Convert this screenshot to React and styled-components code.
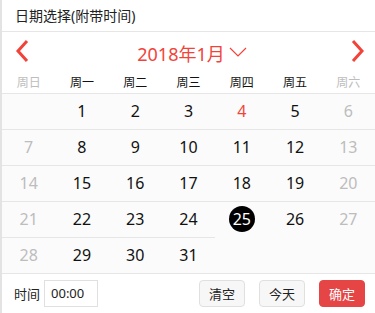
import React from "react";
import styled, { createGlobalStyle } from "styled-components";

const GlobalStyle = createGlobalStyle`
  body {
    margin: 0;
    background: #fff;
    font-family: "Noto Sans", "Noto Sans CJK SC", sans-serif;
  }
`;

const weekNames = ["周日", "周一", "周二", "周三", "周四", "周五", "周六"];

const buildDays = () => {
  const days = [null];
  for (let d = 1; d <= 31; d++) days.push(d);
  return days;
};

const Picker = () => {
  const days = buildDays();
  return (
    <Wrapper>
      <GlobalStyle />
      <Title>日期选择(附带时间)</Title>
      <MonthBar>
        <ArrowButton>
          <svg width="14" height="24" viewBox="0 0 14 24">
            <path d="M12 2 L3 12 L12 22" fill="none" stroke="#f2433a" strokeWidth="3" />
          </svg>
        </ArrowButton>
        <MonthLabel>
          2018年1月
          <svg width="18" height="10" viewBox="0 0 18 10">
            <path d="M1 1 L9 9 L17 1" fill="none" stroke="#f2433a" strokeWidth="1.2" />
          </svg>
        </MonthLabel>
        <ArrowButton>
          <svg width="14" height="24" viewBox="0 0 14 24">
            <path d="M2 2 L11 12 L2 22" fill="none" stroke="#f2433a" strokeWidth="3" />
          </svg>
        </ArrowButton>
      </MonthBar>
      <WeekRow>
        {weekNames.map((w, i) => (
          <WeekName key={w} $weekend={i === 0 || i === 6}>
            {w}
          </WeekName>
        ))}
      </WeekRow>
      <DayGrid>
        {days.map((d, i) => {
          const col = i % 7;
          return (
            <DayCell key={i}>
              {d === 25 ? (
                <Selected>{d}</Selected>
              ) : (
                <DayNum $weekend={col === 0 || col === 6} $red={d === 4}>
                  {d}
                </DayNum>
              )}
            </DayCell>
          );
        })}
      </DayGrid>
      <Footer>
        <TimeLabel>时间</TimeLabel>
        <TimeInput>00:00</TimeInput>
        <Spacer />
        <Button>清空</Button>
        <Button>今天</Button>
        <Button $primary>确定</Button>
      </Footer>
    </Wrapper>
  );
};

const Wrapper = styled.div`
  width: 373px;
  height: 313px;
  border-left: 2px solid #e3e3e3;
  display: flex;
  flex-direction: column;
  background: #fff;
`;

const Title = styled.div`
  height: 31px;
  line-height: 31px;
  padding-left: 13px;
  font-size: 14px;
  color: #222;
  border-bottom: 1px solid #e6e6e6;
`;

const MonthBar = styled.div`
  height: 38px;
  display: flex;
  align-items: center;
  justify-content: space-between;
  padding: 0 9px 0 12px;
`;

const ArrowButton = styled.div`
  width: 16px;
  height: 24px;
  display: flex;
  align-items: center;
  justify-content: center;
`;

const MonthLabel = styled.div`
  display: flex;
  align-items: center;
  gap: 4px;
  font-size: 18px;
  color: #f2433a;
  padding-top: 3px;
  margin-left: 4px;

  svg {
    margin-top: -2px;
  }
`;

const WeekRow = styled.div`
  display: grid;
  grid-template-columns: repeat(7, 1fr);
  height: 22px;
  align-items: center;
  padding-top: 1px;
`;

const WeekName = styled.div`
  text-align: center;
  font-size: 12px;
  color: ${(p) => (p.$weekend ? "#bdbdbd" : "#111")};
`;

const DayGrid = styled.div`
  display: grid;
  grid-template-columns: repeat(7, 1fr);
  grid-auto-rows: 36px;
  background: #fbfbfb;
  height: 180px;
`;

const DayCell = styled.div`
  border-top: 1px solid #e6e6e6;
  display: flex;
  align-items: center;
  justify-content: center;
  padding-bottom: 1px;
`;

const DayNum = styled.span`
  font-size: 16px;
  color: ${(p) => (p.$red ? "#f2433a" : p.$weekend ? "#bdbdbd" : "#111")};
`;

const Selected = styled.span`
  width: 26px;
  height: 26px;
  border-radius: 50%;
  background: #000;
  color: #fff;
  font-size: 16px;
  display: flex;
  align-items: center;
  justify-content: center;
`;

const Footer = styled.div`
  flex: 1;
  border-top: 1px solid #e6e6e6;
  display: flex;
  align-items: center;
  padding: 0 10px 0 12px;
  gap: 14px;
`;

const TimeLabel = styled.span`
  font-size: 13px;
  color: #222;
  margin-right: -8px;
`;

const TimeInput = styled.div`
  width: 46px;
  height: 25px;
  border: 1px solid #e0e0e0;
  font-size: 13px;
  color: #222;
  line-height: 25px;
  padding-left: 6px;
  margin-left: -2px;
`;

const Spacer = styled.div`
  flex: 1;
  margin-left: -14px;
`;

const Button = styled.div`
  width: 44px;
  height: 25px;
  border: 1px solid ${(p) => (p.$primary ? "#e54545" : "#e0e0e0")};
  background: ${(p) => (p.$primary ? "#e54545" : "#f7f7f7")};
  color: ${(p) => (p.$primary ? "#fff" : "#222")};
  border-radius: 4px;
  font-size: 13px;
  display: flex;
  align-items: center;
  justify-content: center;
`;

export default Picker;
